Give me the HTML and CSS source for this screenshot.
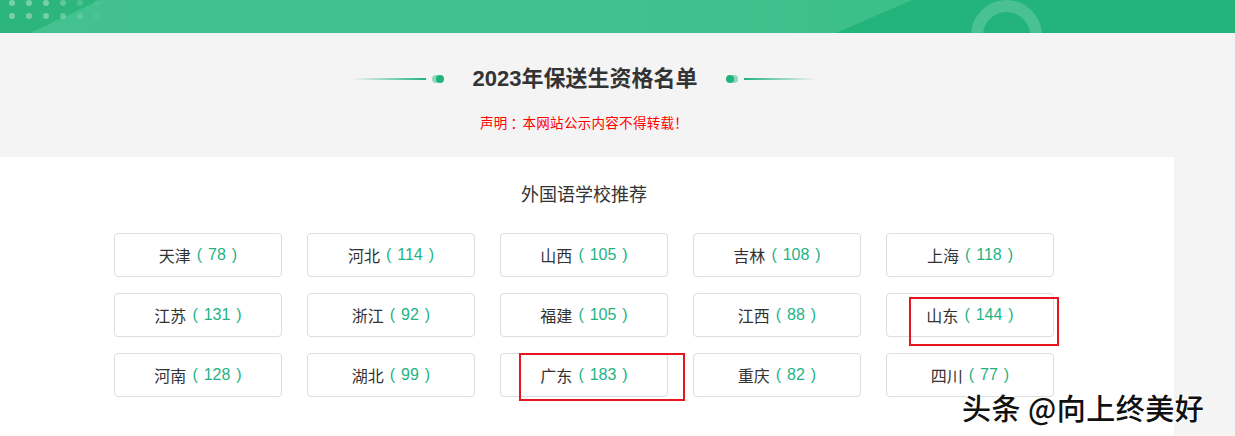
FILE: index.html
```html
<!DOCTYPE html>
<html lang="zh-CN">
<head>
<meta charset="utf-8">
<title>2023年保送生资格名单</title>
<link rel="stylesheet" href="styles.css">
</head>
<body>
<div class="banner">
  <div class="banner-light"></div>
  <div class="banner-dots">
    <span></span><span></span><span></span><span></span><span></span><span></span>
    <span></span><span></span><span></span><span></span><span></span><span></span>
  </div>
  <div class="banner-ring"></div>
</div>
<div class="head">
  <div class="head-title">
    <span class="line line-left"></span>
    <span class="dot dot-left"></span>
    <h1>2023年保送生资格名单</h1>
    <span class="dot dot-right"></span>
    <span class="line line-right"></span>
  </div>
  <p class="notice">声明<span class="colon">：</span>本网站公示内容不得转载！</p>
</div>
<div class="panel">
  <h2 class="panel-title">外国语学校推荐</h2>
  <div class="grid">
    <div class="cell">天津<span class="num">( 78 )</span></div>
    <div class="cell">河北<span class="num">( 114 )</span></div>
    <div class="cell">山西<span class="num">( 105 )</span></div>
    <div class="cell">吉林<span class="num">( 108 )</span></div>
    <div class="cell">上海<span class="num">( 118 )</span></div>
    <div class="cell">江苏<span class="num">( 131 )</span></div>
    <div class="cell">浙江<span class="num">( 92 )</span></div>
    <div class="cell">福建<span class="num">( 105 )</span></div>
    <div class="cell">江西<span class="num">( 88 )</span></div>
    <div class="cell">山东<span class="num">( 144 )</span></div>
    <div class="cell">河南<span class="num">( 128 )</span></div>
    <div class="cell">湖北<span class="num">( 99 )</span></div>
    <div class="cell">广东<span class="num">( 183 )</span></div>
    <div class="cell">重庆<span class="num">( 82 )</span></div>
    <div class="cell">四川<span class="num">( 77 )</span></div>
  </div>
</div>
<div class="mark mark-sd"></div>
<div class="mark mark-gd"></div>
<div class="watermark">头条 @向上终美好</div>
</body>
</html>
```

FILE: styles.css
```css
* { box-sizing: border-box; }
html, body { margin: 0; padding: 0; }
body {
  background: #f4f4f4;
  font-family: "Liberation Sans", "Noto Sans CJK SC", sans-serif;
  color: #333;
  width: 1235px;
  height: 436px;
  overflow: hidden;
  position: relative;
}
.banner {
  height: 33px;
  background: #22b47a;
  position: relative;
  overflow: hidden;
}
.banner-light {
  position: absolute;
  inset: 0;
  background: #2cb57d;
}
.banner-light::after {
  content: "";
  position: absolute;
  inset: 0;
  background: linear-gradient(90deg, #43c28f 0%, #3fc08c 60%, #36bc86 100%);
  clip-path: polygon(100px 0, 912px 0, 836px 33px, 30px 33px);
}
.banner-light::before {
  content: "";
  position: absolute;
  inset: 0;
  background: #22b47a;
  clip-path: polygon(912px 0, 1235px 0, 1235px 33px, 836px 33px);
}
.banner-dots {
  position: absolute;
  left: 6px;
  top: -3px;
  display: grid;
  grid-template-columns: repeat(6, 11px);
  column-gap: 6px;
  row-gap: 2px;
}
.banner-dots span {
  width: 11px;
  height: 11px;
  display: flex;
  align-items: center;
  justify-content: center;
}
.banner-dots span::after {
  content: "";
  width: 6px;
  height: 6px;
  border-radius: 50%;
  background: rgba(255, 255, 255, 0.35);
}
.banner-dots span:nth-child(6n+4)::after { background: rgba(255, 255, 255, 0.25); }
.banner-dots span:nth-child(6n+5)::after { background: rgba(255, 255, 255, 0.15); }
.banner-dots span:nth-child(6n)::after { background: rgba(255, 255, 255, 0.06); }
.banner-ring {
  position: absolute;
  left: 971px;
  top: 0;
  width: 71px;
  height: 71px;
  border-radius: 50%;
  border: 12px solid rgba(255, 255, 255, 0.18);
}
.head {
  padding: 31px 0 25px;
  display: flex;
  flex-direction: column;
  align-items: center;
  width: 1168px;
}
.head-title {
  display: flex;
  align-items: center;
  height: 30px;
}
.head-title h1 {
  margin: 0 29px;
  font-size: 22px;
  line-height: 30px;
  font-weight: bold;
  color: #333;
}
.line {
  width: 74px;
  height: 2px;
}
.line-left {
  background: linear-gradient(90deg, rgba(32, 180, 124, 0) 0%, rgba(32, 180, 124, 0.5) 50%, #20b47c 100%);
  margin-right: 10px;
}
.line-right {
  width: 72px;
  background: linear-gradient(90deg, #20b47c 0%, rgba(32, 180, 124, 0.5) 50%, rgba(32, 180, 124, 0) 100%);
  margin-left: 10px;
}
.dot {
  width: 8px;
  height: 8px;
  border-radius: 50%;
  background: #20b47c;
}
.dot-left { box-shadow: -4px 0 0 #8ed8ba; }
.dot-right { box-shadow: 4px 0 0 #8ed8ba; }
.notice {
  margin: 18px 0 0;
  font-family: "Noto Sans CJK SC", sans-serif;
  font-size: 13.5px;
  line-height: 20px;
  letter-spacing: 0.3px;
  color: #f00;
}
.colon {
  display: inline-block;
  width: 12px;
  margin-left: 3px;
  overflow: hidden;
  vertical-align: top;
}
.panel {
  width: 1174px;
  background: #fff;
  padding-top: 25px;
  height: 279px;
}
.panel-title {
  margin: 0;
  text-align: center;
  width: 1168px;
  font-size: 18px;
  line-height: 26px;
  font-weight: normal;
  color: #333;
}
.grid {
  margin: 25px 0 0 114px;
  display: grid;
  grid-template-columns: repeat(5, 168px);
  grid-auto-rows: 44px;
  column-gap: 25px;
  row-gap: 16px;
}
.cell {
  border: 1px solid #ddd;
  border-radius: 4px;
  display: flex;
  align-items: center;
  justify-content: center;
  font-size: 16px;
  color: #333;
}
.num {
  color: #1fb384;
  margin-left: 6px;
  word-spacing: 1.5px;
  white-space: pre;
}
.mark {
  position: absolute;
  border: 2px solid #e8141e;
}
.mark-sd { left: 909px; top: 297px; width: 150px; height: 49px; }
.mark-gd { left: 519px; top: 353px; width: 166px; height: 48px; }
.watermark {
  position: absolute;
  left: 962px;
  top: 388px;
  font-family: "Noto Sans CJK SC", sans-serif;
  font-size: 29px;
  line-height: 38px;
  font-weight: 500;
  color: #111;
  letter-spacing: 0.5px;
  text-shadow: 1px 1px 0 #fff, -1px -1px 0 #fff, 1px -1px 0 #fff, -1px 1px 0 #fff;
}
```
